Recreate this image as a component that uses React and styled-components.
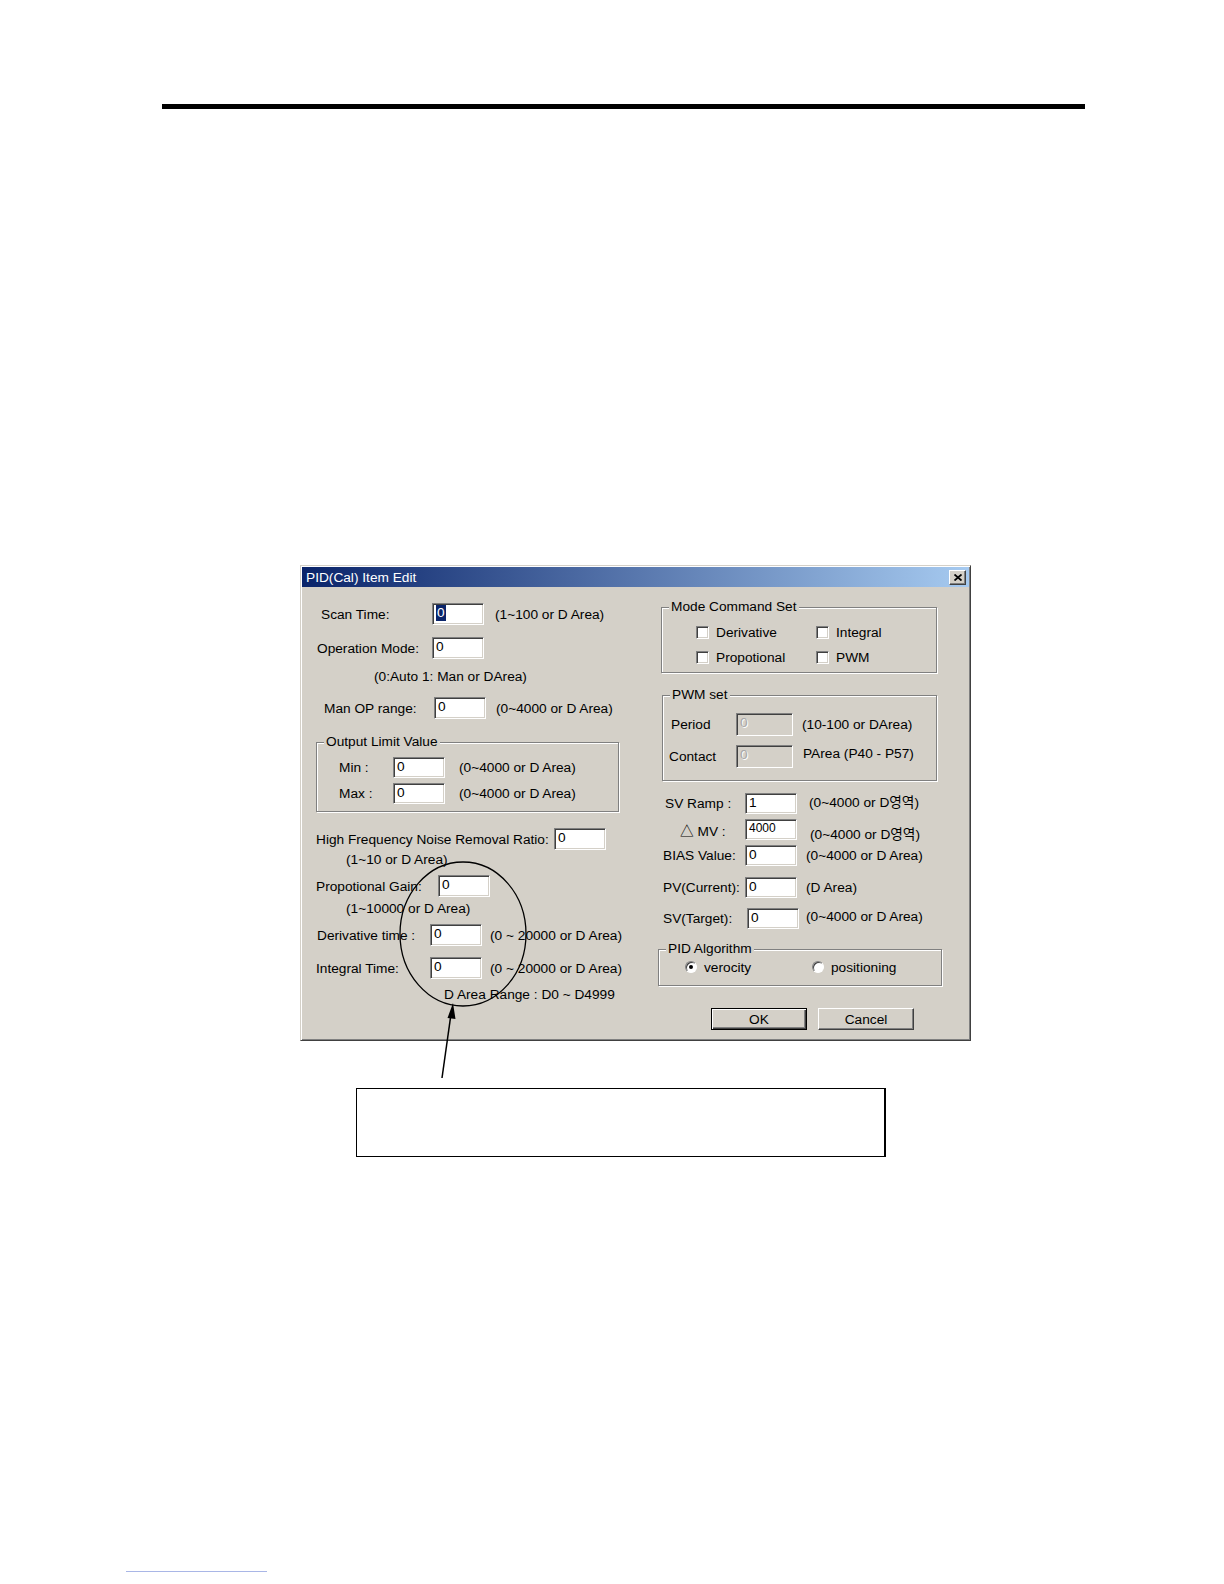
import React from "react";
import styled, { createGlobalStyle } from "styled-components";

const GlobalStyle = createGlobalStyle`
  body {
    margin: 0;
    background: #fff;
  }
`;

const Page = styled.div`
  position: relative;
  width: 1224px;
  height: 1584px;
  overflow: hidden;
  background: #fff;
  display: flex;
  flex-direction: column;
  align-items: flex-start;
  font-family: "Liberation Sans", Arial, "Noto Sans CJK KR", sans-serif;
`;

const TopRule = styled.div`
  margin: 104px 0 0 162px;
  width: 923px;
  height: 5px;
  background: #000;
`;

const Dialog = styled.div`
  margin: 456px 0 0 300px;
  width: 671px;
  height: 476px;
  box-sizing: border-box;
  padding: 1px;
  background: #d4d0c8;
  border: 1px solid;
  border-color: #d4d0c8 #404040 #404040 #d4d0c8;
  box-shadow: inset 1px 1px #fff, inset -1px -1px #808080;
  display: flex;
  flex-direction: column;
  font-size: 13.7px;
  color: #000;
`;

const TitleBar = styled.div`
  height: 20px;
  flex-shrink: 0;
  display: flex;
  align-items: center;
  justify-content: space-between;
  padding: 0 3px 0 4px;
  background: linear-gradient(to right, #0a246a, #a6caf0);
  color: #fff;
`;

const CloseButton = styled.div`
  width: 17px;
  height: 15px;
  box-sizing: border-box;
  display: flex;
  align-items: center;
  justify-content: center;
  background: #d4d0c8;
  border: 1px solid;
  border-color: #fff #404040 #404040 #fff;
  box-shadow: inset -1px -1px #808080;
`;

const Body = styled.div`
  display: flex;
  padding-left: 14px;
`;

const Column = styled.div`
  width: ${(p) => p.$w}px;
  display: flex;
  flex-direction: column;
  align-items: flex-start;
`;

const Row = styled.div`
  display: flex;
  align-items: center;
  height: ${(p) => p.$h || 22}px;
  margin-top: ${(p) => p.$mt || 0}px;
  padding-left: ${(p) => p.$pl || 0}px;
  white-space: nowrap;
`;

const Note = styled.div`
  height: 18px;
  line-height: 18px;
  margin-top: ${(p) => p.$mt || 0}px;
  padding-left: ${(p) => p.$pl || 0}px;
  white-space: nowrap;
`;

const Label = styled.span`
  width: ${(p) => p.$w}px;
  flex-shrink: 0;
`;

const Hint = styled.span`
  margin-left: ${(p) => p.$ml || 10}px;
  transform: translateY(${(p) => p.$dy || 0}px);
`;

const TextBox = styled.div`
  width: ${(p) => p.$w || 52}px;
  height: 100%;
  flex-shrink: 0;
  box-sizing: border-box;
  padding: 1px 0 0 3px;
  line-height: 15px;
  font-size: ${(p) => (p.$small ? "12px" : "13.7px")};
  background: ${(p) => (p.$disabled ? "#d4d0c8" : "#fff")};
  color: ${(p) => (p.$disabled ? "#a8a8a8" : "#000")};
  text-shadow: ${(p) => (p.$disabled ? "1px 1px #fff" : "none")};
  border: 1px solid;
  border-color: #808080 #fff #fff #808080;
  box-shadow: inset 1px 1px #404040, inset -1px -1px #d4d0c8;
`;

const Selected = styled.span`
  display: inline-block;
  background: #0a246a;
  color: #fff;
  padding: 0 1px;
  line-height: 16px;
`;

const Group = styled.div`
  position: relative;
  box-sizing: border-box;
  width: ${(p) => p.$w}px;
  height: ${(p) => p.$h}px;
  margin-top: ${(p) => p.$mt || 0}px;
  margin-left: ${(p) => p.$ml || 0}px;
  padding-top: ${(p) => p.$pt || 0}px;
  border: 1px solid #808080;
  box-shadow: 1px 1px #fff, inset 1px 1px #fff;
`;

const Legend = styled.span`
  position: absolute;
  top: -9px;
  left: 7px;
  padding: 0 2px;
  line-height: 16px;
  background: #d4d0c8;
  white-space: nowrap;
`;

const CheckGrid = styled.div`
  display: grid;
  grid-template-columns: 120px auto;
  grid-auto-rows: 20px;
  row-gap: 5px;
  padding: 14px 0 0 34px;
`;

const CheckItem = styled.label`
  display: flex;
  align-items: center;
  gap: 7px;
`;

const CheckBox = styled.span`
  width: 13px;
  height: 13px;
  box-sizing: border-box;
  background: #fff;
  border: 1px solid;
  border-color: #808080 #fff #fff #808080;
  box-shadow: inset 1px 1px #404040, inset -1px -1px #d4d0c8;
`;

const RadioRow = styled.div`
  display: flex;
  align-items: center;
  height: 16px;
  padding-left: 26px;
`;

const RadioItem = styled.label`
  display: flex;
  align-items: center;
  gap: 7px;
  width: ${(p) => p.$w || "auto"};
`;

const Radio = styled.span`
  width: 12px;
  height: 12px;
  box-sizing: border-box;
  border-radius: 50%;
  background: #fff;
  border: 1px solid;
  border-color: #808080 #fff #fff #808080;
  box-shadow: inset 1px 1px #404040;
  display: flex;
  align-items: center;
  justify-content: center;
  &::after {
    content: "";
    width: 4px;
    height: 4px;
    border-radius: 50%;
    background: ${(p) => (p.$on ? "#000" : "transparent")};
  }
`;

const ButtonRow = styled.div`
  display: flex;
  gap: 11px;
  margin-top: 22px;
  padding-left: 53px;
`;

const Button = styled.div`
  width: 96px;
  height: 22px;
  box-sizing: border-box;
  display: flex;
  align-items: center;
  justify-content: center;
  background: #d4d0c8;
  border: 1px solid;
  border-color: ${(p) => (p.$default ? "#000" : "#fff #404040 #404040 #fff")};
  box-shadow: ${(p) =>
    p.$default
      ? "inset 1px 1px #fff, inset -1px -1px #404040, inset -2px -2px #808080"
      : "inset -1px -1px #808080"};
`;

const Callout = styled.div`
  margin: 47px 0 0 356px;
  width: 530px;
  height: 69px;
  box-sizing: border-box;
  border: 1px solid #000;
  border-right-width: 2px;
`;

const FooterLink = styled.div`
  margin: 414px 0 0 126px;
  width: 141px;
  height: 1px;
  background: #a9b6e6;
`;

const Annotation = styled.svg`
  position: absolute;
  left: 0;
  top: 0;
  pointer-events: none;
`;

export default function App() {
  return (
    <Page>
      <GlobalStyle />
      <TopRule />
      <Dialog>
        <TitleBar>
          <span>PID(Cal) Item Edit</span>
          <CloseButton>
            <svg width="8" height="7" viewBox="0 0 8 7">
              <path d="M0.5 0.5 L7.5 6.5 M7.5 0.5 L0.5 6.5" stroke="#000" strokeWidth="1.8" />
            </svg>
          </CloseButton>
        </TitleBar>
        <Body>
          <Column $w={342}>
            <Row $mt={16} $pl={5}>
              <Label $w={111}>Scan Time:</Label>
              <TextBox><Selected>0</Selected></TextBox>
              <Hint $ml={11}>(1~100 or D Area)</Hint>
            </Row>
            <Row $mt={12} $pl={1}>
              <Label $w={115}>Operation Mode:</Label>
              <TextBox>0</TextBox>
            </Row>
            <Note $mt={9} $pl={58}>(0:Auto 1: Man or DArea)</Note>
            <Row $mt={11} $pl={8}>
              <Label $w={110}>Man OP range:</Label>
              <TextBox>0</TextBox>
              <Hint $ml={10}>(0~4000 or D Area)</Hint>
            </Row>
            <Group $mt={23} $w={303} $h={70} $pt={14}>
              <Legend>Output Limit Value</Legend>
              <Row $h={21} $pl={22}>
                <Label $w={54}>Min :</Label>
                <TextBox>0</TextBox>
                <Hint $ml={14}>(0~4000 or D Area)</Hint>
              </Row>
              <Row $h={21} $mt={5} $pl={22}>
                <Label $w={54}>Max :</Label>
                <TextBox>0</TextBox>
                <Hint $ml={14}>(0~4000 or D Area)</Hint>
              </Row>
            </Group>
            <Row $mt={16}>
              <Label $w={238}>High Frequency Noise Removal Ratio:</Label>
              <TextBox>0</TextBox>
            </Row>
            <Note $mt={1} $pl={30}>(1~10 or D Area)</Note>
            <Row $mt={6}>
              <Label $w={122}>Propotional Gain:</Label>
              <TextBox>0</TextBox>
            </Row>
            <Note $mt={3} $pl={30}>(1~10000 or D Area)</Note>
            <Row $mt={6} $pl={1}>
              <Label $w={113}>Derivative time :</Label>
              <TextBox>0</TextBox>
              <Hint $ml={8}>(0 ~ 20000 or D Area)</Hint>
            </Row>
            <Row $mt={11}>
              <Label $w={114}>Integral Time:</Label>
              <TextBox>0</TextBox>
              <Hint $ml={8}>(0 ~ 20000 or D Area)</Hint>
            </Row>
            <Note $mt={7} $pl={128}>D Area Range : D0 ~ D4999</Note>
          </Column>

          <Column $w={300}>
            <Group $mt={20} $ml={3} $w={276} $h={66}>
              <Legend>Mode Command Set</Legend>
              <CheckGrid>
                <CheckItem><CheckBox />Derivative</CheckItem>
                <CheckItem><CheckBox />Integral</CheckItem>
                <CheckItem><CheckBox />Propotional</CheckItem>
                <CheckItem><CheckBox />PWM</CheckItem>
              </CheckGrid>
            </Group>
            <Group $mt={22} $ml={4} $w={275} $h={86} $pt={17}>
              <Legend>PWM set</Legend>
              <Row $h={23} $pl={8}>
                <Label $w={65}>Period</Label>
                <TextBox $w={57} $disabled>0</TextBox>
                <Hint $ml={9}>(10-100 or DArea)</Hint>
              </Row>
              <Row $h={23} $mt={9} $pl={6}>
                <Label $w={67}>Contact</Label>
                <TextBox $w={57} $disabled>0</TextBox>
                <Hint $ml={10} $dy={-3}>PArea (P40 - P57)</Hint>
              </Row>
            </Group>
            <Row $h={21} $mt={12} $pl={7}>
              <Label $w={80}>SV Ramp :</Label>
              <TextBox>1</TextBox>
              <Hint $ml={12} $dy={-3}>(0~4000 or D영역)</Hint>
            </Row>
            <Row $h={21} $mt={5} $pl={22}>
              <Label $w={65}>△ MV :</Label>
              <TextBox $small>4000</TextBox>
              <Hint $ml={13} $dy={3}>(0~4000 or D영역)</Hint>
            </Row>
            <Row $h={21} $mt={5} $pl={5}>
              <Label $w={82}>BIAS Value:</Label>
              <TextBox>0</TextBox>
              <Hint $ml={9}>(0~4000 or D Area)</Hint>
            </Row>
            <Row $h={21} $mt={11} $pl={5}>
              <Label $w={82}>PV(Current):</Label>
              <TextBox>0</TextBox>
              <Hint $ml={9}>(D Area)</Hint>
            </Row>
            <Row $h={21} $mt={10} $pl={5}>
              <Label $w={84}>SV(Target):</Label>
              <TextBox>0</TextBox>
              <Hint $ml={7} $dy={-2}>(0~4000 or D Area)</Hint>
            </Row>
            <Group $mt={20} $w={284} $h={37} $pt={9}>
              <Legend>PID Algorithm</Legend>
              <RadioRow>
                <RadioItem $w="127px"><Radio $on />verocity</RadioItem>
                <RadioItem><Radio />positioning</RadioItem>
              </RadioRow>
            </Group>
            <ButtonRow>
              <Button $default>OK</Button>
              <Button>Cancel</Button>
            </ButtonRow>
          </Column>
        </Body>
      </Dialog>
      <Callout />
      <FooterLink />
      <Annotation width="1224" height="1584" viewBox="0 0 1224 1584">
        <ellipse cx="463" cy="934" rx="63" ry="72" fill="none" stroke="#000" strokeWidth="1.3" />
        <line x1="442" y1="1078" x2="451" y2="1014" stroke="#000" strokeWidth="1.5" />
        <polygon points="453,1003 455.5,1019 447.5,1018" fill="#000" />
      </Annotation>
    </Page>
  );
}
